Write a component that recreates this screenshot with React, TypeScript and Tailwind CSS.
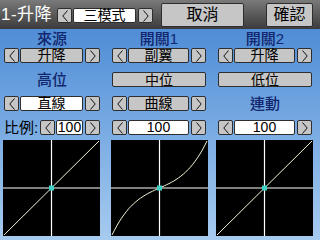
import React from 'react';

const FONT = { fontFamily: '"Liberation Sans", "Noto Sans CJK TC", sans-serif' };

// points for the expo-style curve in the middle chart
const curvePts = Array.from({ length: 41 }, (_, i) => {
  const t = -1 + i / 20;
  const y = 0.45 * t + 0.55 * t * t * t;
  return `${(48.5 + t * 47.5).toFixed(1)},${(48 - y * 47).toFixed(1)}`;
}).join(' ');

function Chevron({ dir }: { dir: 'l' | 'r' }) {
  return (
    <svg width="6" height="12" viewBox="0 0 6 12">
      <polyline
        points={dir === 'l' ? '5.5,0.5 0.8,6 5.5,11.5' : '0.5,0.5 5.2,6 0.5,11.5'}
        fill="none"
        stroke="#111"
        strokeWidth="1"
      />
    </svg>
  );
}

function ArrowBtn({ dir }: { dir: 'l' | 'r' }) {
  return (
    <div className="w-[15px] h-full shrink-0 flex items-center justify-center border border-[#2e2e2e] rounded-[2px] bg-[#c6c6c6]">
      <Chevron dir={dir} />
    </div>
  );
}

function Selector({ value, white }: { value: string; white?: boolean }) {
  return (
    <div className="flex h-[15px] w-full">
      <ArrowBtn dir="l" />
      <div
        className={
          'flex-1 ml-[1px] mr-[2px] flex items-center justify-center border border-[#2e2e2e] rounded-[2px] text-[14px] leading-[13px] text-black ' +
          (white ? 'bg-white' : 'bg-[#c6c6c6]')
        }
      >
        {value}
      </div>
      <ArrowBtn dir="r" />
    </div>
  );
}

function Button({ label, className }: { label: string; className: string }) {
  return (
    <div
      className={
        'flex items-center justify-center border border-[#2e2e2e] rounded-[2px] bg-[#c6c6c6] text-black leading-none ' +
        className
      }
    >
      {label}
    </div>
  );
}

function Chart({ curve, dots }: { curve?: boolean; dots?: boolean }) {
  return (
    <svg width="97" height="96" viewBox="0 0 97 96" className="block">
      <rect width="97" height="96" fill="#000" />
      <line x1="48.5" y1="0" x2="48.5" y2="96" stroke="#fff" strokeWidth="1.2" />
      <line x1="0" y1="48" x2="97" y2="48" stroke="#fff" strokeWidth="1.2" />
      {curve ? (
        <polyline points={curvePts} fill="none" stroke="#f4f4d8" strokeWidth="1" />
      ) : (
        <line x1="1" y1="95" x2="96" y2="1" stroke="#f4f4d8" strokeWidth="1" />
      )}
      {dots && (
        <>
          <rect x="24" y="71" width="1" height="1" fill="#bbb" />
          <rect x="72" y="24" width="1" height="1" fill="#bbb" />
        </>
      )}
      <rect x="46" y="45.5" width="5" height="5" fill="#3fd2c4" />
    </svg>
  );
}

export default function App() {
  return (
    <div className="w-[320px] h-[240px] overflow-hidden flex flex-col" style={FONT}>
      <div className="h-[29px] shrink-0 flex items-center bg-gradient-to-b from-[#7a7a7a] to-[#3c3c3c]">
        <span className="ml-[1px] w-[56px] text-white text-[17px] leading-none tracking-[0.5px]">1-升降</span>
        <div className="w-[96px] mt-[2px]">
          <Selector value="三模式" white />
        </div>
        <Button label="取消" className="ml-[8px] w-[83px] h-[24px] text-[16px]" />
        <Button label="確認" className="ml-[22px] w-[47px] h-[24px] text-[16px]" />
      </div>

      <div className="flex-1 bg-gradient-to-b from-[#4f8dd6] to-[#a6cbef] pl-[4px]">
        <div className="grid grid-cols-[96px_94px_94px] gap-x-[12px] h-[18px] text-[15px] leading-[13px] font-medium text-[#12266e]">
          <span className="text-center pt-[3px]">來源</span>
          <span className="text-center pt-[3px]">開關1</span>
          <span className="text-center pt-[3px]">開關2</span>
        </div>

        <div className="grid grid-cols-[96px_94px_94px] gap-x-[12px] mt-[1px] h-[15px]">
          <Selector value="升降" />
          <Selector value="副翼" />
          <Selector value="升降" />
        </div>

        <div className="grid grid-cols-[96px_94px_94px] gap-x-[12px] mt-[9px] h-[15px] items-center">
          <span className="text-center text-[15px] leading-none font-medium text-[#12266e]">高位</span>
          <Button label="中位" className="h-[15px] text-[14px]" />
          <Button label="低位" className="h-[15px] text-[14px]" />
        </div>

        <div className="grid grid-cols-[96px_94px_94px] gap-x-[12px] mt-[9px] h-[15px] items-center">
          <Selector value="直線" white />
          <Selector value="曲線" />
          <span className="text-center text-[15px] leading-none font-medium text-[#12266e]">連動</span>
        </div>

        <div className="grid grid-cols-[96px_94px_94px] gap-x-[12px] mt-[9px] h-[15px] items-center">
          <div className="flex items-center h-[15px]">
            <span className="w-[36px] text-[15px] leading-none text-black">比例:</span>
            <div className="flex-1">
              <Selector value="100" white />
            </div>
          </div>
          <Selector value="100" white />
          <Selector value="100" white />
        </div>

        <div className="flex mt-[5px] ml-[-1px]">
          <Chart dots />
          <div className="ml-[11px]">
            <Chart curve />
          </div>
          <div className="ml-[8px]">
            <Chart />
          </div>
        </div>
      </div>
    </div>
  );
}
